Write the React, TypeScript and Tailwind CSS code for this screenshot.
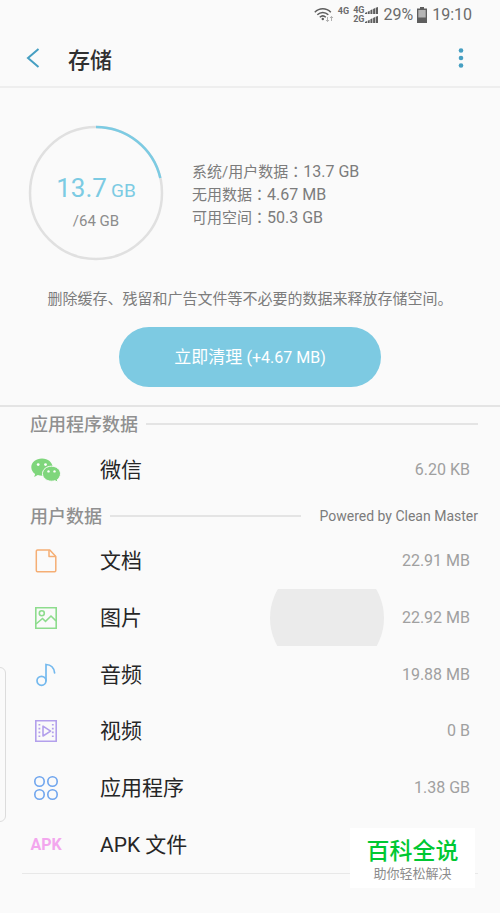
import React from 'react';

const Wechat = () => (
  <svg viewBox="0 0 30 25" className="w-[30px] h-[25px]">
    <path
      fill="#7fd67c"
      d="M11 .5C5 .5.3 4.400.3 9.200c0 2.800 1.500 5.200 3.800 6.800L3.200 19l3.600-1.900c1.300.4 2.700.6 4.200.6 6 0 10.700-3.900 10.700-8.500S17 .5 11 .5z"
    />
    <path
      fill="#7fd67c"
      stroke="#fafafa"
      strokeWidth="1"
      d="M20.500 8.200c-5 0-9 3.300-9 7.500s4 7.500 9 7.500c1.200 0 2.400-.2 3.500-.5l3 1.600-.7-2.700c2-1.400 3.200-3.500 3.200-5.900 0-4.200-4-7.500-9-7.500z"
    />
    <circle cx="7.200" cy="6.600" r="1.400" fill="#fff" />
    <circle cx="14.500" cy="6.600" r="1.400" fill="#fff" />
    <circle cx="17.500" cy="13.400" r="1.200" fill="#fff" />
    <circle cx="23.500" cy="13.400" r="1.200" fill="#fff" />
  </svg>
);

const Doc = () => (
  <svg viewBox="0 0 24 24" className="w-6 h-6" fill="none" stroke="#f5ae74" strokeWidth="1.500" strokeLinejoin="round">
    <path d="M3.500 1h12.300l6 6.500V21.500a1.200 1.200 0 0 1-1.200 1.200H3.500a1.200 1.200 0 0 1-1.200-1.200V2.200A1.200 1.200 0 0 1 3.500 1z" />
    <path d="M15 1.200v6.400h6.500" />
  </svg>
);

const Picture = () => (
  <svg viewBox="0 0 24 24" className="w-6 h-6" fill="none" stroke="#8ddc8d" strokeWidth="1.600">
    <path d="M1.800 1.800h20.400v20.400H1.800z" />
    <circle cx="7.800" cy="7.300" r="2.500" />
    <path d="M2 18l6.500-5.500 3 2.800 5.500-5.300 5 4.800" />
  </svg>
);

const Music = () => (
  <svg viewBox="0 0 24 24" className="w-6 h-6" fill="none" stroke="#74b9ee" strokeWidth="1.700" strokeLinecap="round">
    <circle cx="7.500" cy="17.800" r="4.500" />
    <path d="M12 17.800V1.500c4.800.2 8 3.300 8.600 8.300" />
  </svg>
);

const Video = () => (
  <svg viewBox="0 0 24 24" className="w-6 h-6" fill="none" stroke="#b3a0ec" strokeWidth="1.600">
    <path d="M1.800 1.800h20.400v20.400H1.800z" />
    <path d="M9 7.200v9.800l7.600-4.900z" strokeLinejoin="round" />
    <path d="M5.400 5v15M18.800 5v15" strokeWidth="1.800" strokeDasharray="1.600 2.200" />
  </svg>
);

const Apps = () => (
  <svg viewBox="0 0 24 24" className="w-6 h-6" fill="none" stroke="#6fa5ee" strokeWidth="1.600">
    <circle cx="5.500" cy="5.500" r="4.700" />
    <circle cx="18.500" cy="5.500" r="4.700" />
    <circle cx="5.500" cy="18.500" r="4.700" />
    <circle cx="18.500" cy="18.500" r="4.700" />
  </svg>
);

const Signal = () => (
  <svg viewBox="0 0 13 7" className="w-[13px] h-[7px]" fill="#5e5e5e">
    <path d="M0 7V6l2-1v2zM2.700 7V4.700l2-1V7zM5.400 7V3.300l2-1V7zM8.100 7V2l2-1v6zM10.700 7V.8L13 0v7z" />
  </svg>
);

const StatusBar = () => (
  <div className="h-[30px] pr-7 flex items-center justify-end text-[#6b6b6b]">
    <svg viewBox="0 0 20 16" className="w-5 h-4" fill="none" stroke="#5e5e5e" strokeWidth="1.500">
      <path d="M.8 5.200c4.600-4.700 11.400-4.700 16 0M3.300 7.800c3.200-3.200 7.800-3.200 11 0M5.800 10.300c1.900-1.800 4.100-1.800 6 0" />
      <circle cx="8.800" cy="12" r="1.200" fill="#5e5e5e" stroke="none" />
      <path d="M13.500 10v4.500M12 13l1.500 1.600L15 13M17.500 14V9.500M16 11l1.500-1.600L19 11" stroke="#b0b0b0" strokeWidth="1" />
    </svg>
    <span className="ml-1 mb-2 text-[9px] leading-none font-bold">4G</span>
    <div className="ml-1 text-[9px] leading-none font-bold">
      <div className="flex items-center gap-px">4G<Signal /></div>
      <div className="flex items-center gap-px">2G<Signal /></div>
    </div>
    <span className="ml-[5px] text-base">29%</span>
    <svg viewBox="0 0 10 16" className="ml-1 w-[10px] h-4">
      <path d="M3 0h4v1.500h3V16H0V1.500h3z" fill="#5e5e5e" />
      <path d="M1.300 3h7.400v7.500H1.300z" fill="#b5b5b5" />
    </svg>
    <span className="ml-[5px] text-base">19:10</span>
  </div>
);

const Info = ({ label, value }: { label: string; value: string }) => (
  <p>
    {label}
    <span className="font-['Noto_Sans_CJK_TC',sans-serif]">：</span>
    <span className="text-base leading-none">{value}</span>
  </p>
);

const Row = ({ icon, label, value }: { icon: React.ReactNode; label: string; value?: string }) => (
  <li className="flex items-center px-[30px]">
    <span className="w-8 flex justify-center">{icon}</span>
    <span className="ml-[38px] flex-1 text-[21px] leading-8 text-[#262626]">{label}</span>
    <span className="text-base text-[#a0a0a0]">{value}</span>
  </li>
);

const files = [
  { icon: <Doc />, label: '文档', value: '22.91 MB' },
  { icon: <Picture />, label: '图片', value: '22.92 MB' },
  { icon: <Music />, label: '音频', value: '19.88 MB' },
  { icon: <Video />, label: '视频', value: '0 B' },
  { icon: <Apps />, label: '应用程序', value: '1.38 GB' },
  { icon: <span className="text-base font-bold text-[#f3a6ee]">APK</span>, label: 'APK 文件' },
];

const App: React.FC = () => {
  return (
    <div className="relative min-h-screen overflow-hidden bg-[#fafafa] font-[Roboto,'Noto_Sans_CJK_SC',sans-serif]">
      <StatusBar />

      <header className="h-[58px] flex items-center pl-[26px] pr-[30px] border-b-2 border-[#eeeeee]">
        <button aria-label="返回">
          <svg viewBox="0 0 14 20" className="w-[14px] h-5" fill="none" stroke="#469fc2" strokeWidth="2">
            <path d="M12.500 1L2 10l10.500 9" />
          </svg>
        </button>
        <h1 className="ml-7 pt-1 flex-1 text-[22px] font-medium text-[#303030]">存储</h1>
        <button aria-label="更多" className="w-[18px] flex justify-center">
          <svg viewBox="0 0 6 20" className="w-[6px] h-5" fill="#469fc2">
            <circle cx="3" cy="2.500" r="2.300" />
            <circle cx="3" cy="10" r="2.300" />
            <circle cx="3" cy="17.500" r="2.300" />
          </svg>
        </button>
      </header>

      <section className="pt-[37px] pb-[18px] border-b-2 border-[#e4e4e4]">
        <div className="flex items-center pl-7">
          <div className="relative w-[136px] h-[136px]">
            <svg viewBox="0 0 136 136" className="w-full h-full" fill="none" strokeWidth="2.500">
              <circle cx="68" cy="68" r="66" stroke="#e0e0e0" />
              <path d="M68 2A66 66 0 0 1 132.300 53" stroke="#7ccbe3" />
            </svg>
            <div className="absolute inset-0 pt-5 flex flex-col items-center justify-center">
              <div className="flex items-baseline gap-1 leading-8 text-[#7ccbe3]">
                <span className="text-[26px]">13.7</span>
                <span className="text-[19px]">GB</span>
              </div>
              <div className="text-[15px] leading-7 text-[#8c8c8c]">/64 GB</div>
            </div>
          </div>
          <div className="ml-7 pt-0.5 text-[15px] leading-[22px] text-[#7c7c7c]">
            <Info label="系统/用户数据" value="13.7 GB" />
            <Info label="无用数据" value="4.67 MB" />
            <Info label="可用空间" value="50.3 GB" />
          </div>
        </div>
        <p className="mt-[26px] text-center text-[15px] leading-6 text-[#7c7c7c]">
          删除缓存、残留和广告文件等不必要的数据来释放存储空间。
        </p>
        <button className="mt-4 mx-auto w-[262px] h-[60px] pt-0.5 flex items-center justify-center rounded-full bg-[#7dcae2] text-white text-[17px]">
          立即清理&nbsp;<span className="text-base">(+4.67 MB)</span>
        </button>
      </section>

      <section>
        <div className="h-[34px] pl-[30px] pr-[22px] flex items-center">
          <h2 className="text-[18px] font-medium text-[#909090]">应用程序数据</h2>
          <div className="ml-2 flex-1 h-[2px] bg-[#e4e4e4]" />
        </div>
        <ul className="grid h-[58px]">
          <Row icon={<Wechat />} label="微信" value="6.20 KB" />
        </ul>
      </section>

      <section>
        <div className="h-[34px] pl-[30px] pr-[22px] flex items-center">
          <h2 className="text-[18px] font-medium text-[#909090]">用户数据</h2>
          <div className="ml-2 mr-[18px] flex-1 h-[2px] bg-[#e4e4e4]" />
          <span className="text-sm text-[#7c7c7c]">Powered by Clean Master</span>
        </div>
        <div className="relative">
          {/* touch ripple on the picture row */}
          <div className="absolute right-[116px] top-14 w-[114px] h-[57px] overflow-hidden flex items-center justify-center">
            <div className="shrink-0 w-[114px] h-[114px] rounded-full bg-[#ebebeb]" />
          </div>
          <ul className="relative grid grid-rows-6 h-[340px]">
            {files.map((f) => (
              <Row key={f.label} icon={f.icon} label={f.label} value={f.value} />
            ))}
          </ul>
        </div>
        <hr className="mx-[22px] border-[#e8e8e8]" />
      </section>

      {/* edge panel handle */}
      <div className="absolute -left-2 top-[667px] w-[14px] h-[155px] rounded-md border border-[#dcdcdc]" />

      <div className="absolute right-[25px] top-[828px] w-[125px] h-[60px] pt-1 flex flex-col items-center justify-center bg-white">
        <span className="text-[23px] leading-7 font-medium text-[#00c832]">百科全说</span>
        <span className="text-[13px] leading-4 text-[#8c8c8c]">助你轻松解决</span>
      </div>
    </div>
  );
};

export default App;
